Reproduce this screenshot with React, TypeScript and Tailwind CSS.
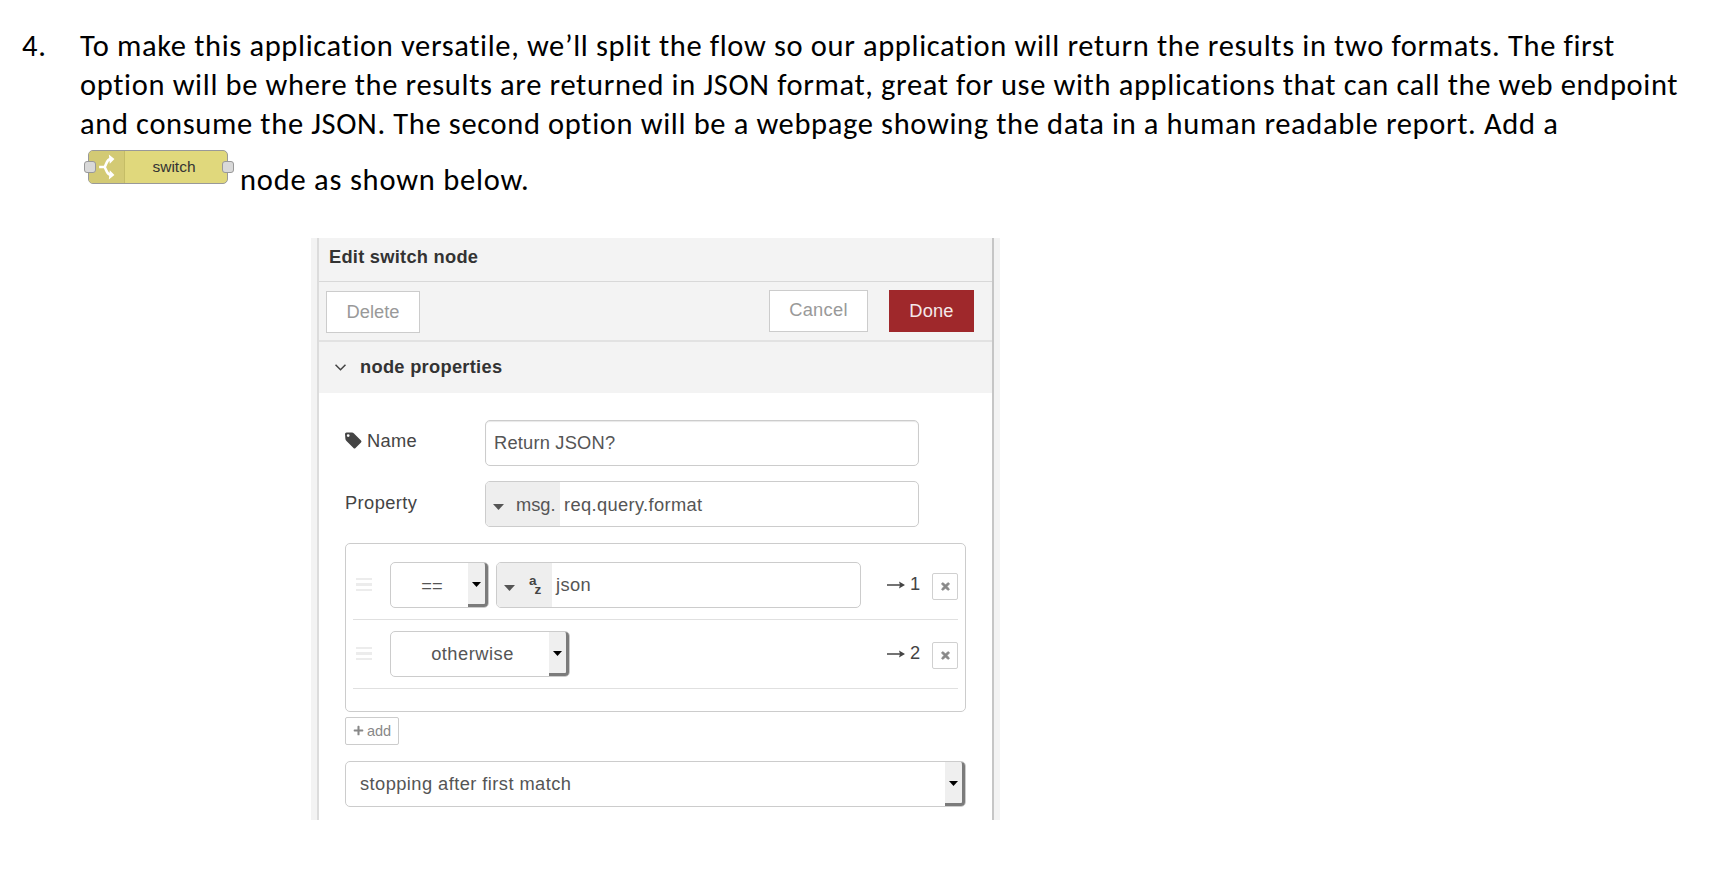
import React from "react";
import { FaPlus, FaTimes } from "react-icons/fa";

function SwitchNode() {
  return (
    <div className="relative mt-[6px] flex h-[34px] w-[140px] overflow-visible rounded-[5px] border-[1.5px] border-[#999] bg-[#e0d87c] font-['Liberation_Sans',sans-serif] tracking-normal">
      <div className="flex w-[36px] items-center justify-center rounded-l-[4px] border-r border-[#c5bd66] bg-[#d3ca74]">
        <svg className="ml-[1px] h-[26px] w-[18px]" viewBox="0 0 18 28" fill="none" stroke="#fff" strokeWidth="2.8">
          <path d="M0.5 14H7M12.5 5.5C9 6 9 9 6.5 14C9 19 9 22 12.500 22.500" />
          <path d="M11 0.500L17 5.500L12 10.500ZM12 17.500L17 22.500L11 27.500Z" fill="#fff" stroke="none" />
        </svg>
      </div>
      <div className="flex flex-1 items-center justify-center pr-[4px] text-[15.5px] text-[#333]">switch</div>
      <div className="absolute -left-[5px] top-[10px] h-[12px] w-[12px] rounded-[3px] border-[1.5px] border-[#999] bg-[#d9d9d9]" />
      <div className="absolute -right-[7px] top-[10px] h-[12px] w-[12px] rounded-[3px] border-[1.5px] border-[#999] bg-[#d9d9d9]" />
    </div>
  );
}

function Caret() {
  return (
    <svg className="h-[6px] w-[11px] shrink-0" viewBox="0 0 11 6">
      <path d="M0 0H11L5.500 6Z" fill="#555" />
    </svg>
  );
}

function SelectButton() {
  return (
    <div className="flex w-[20px] shrink-0 items-center justify-center rounded-r-[4px] border-b-[3px] border-r-[3px] border-[#7b7b7b] bg-[#efefef] pt-[2px]">
      <svg className="h-[5px] w-[9px]" viewBox="0 0 9 5">
        <path d="M0 0H9L4.500 5Z" fill="#000" />
      </svg>
    </div>
  );
}

function Handle() {
  return (
    <div className="flex w-[16px] flex-col gap-[3px]">
      <div className="h-[2.500px] bg-[#ececec]" />
      <div className="h-[2.500px] bg-[#ececec]" />
      <div className="h-[2.500px] bg-[#ececec]" />
    </div>
  );
}

function RuleTarget({ index }: { index: number }) {
  return (
    <div className="ml-auto flex items-center">
      <svg className="mt-[1px] h-[8px] w-[18px]" viewBox="0 0 18 8">
        <path d="M0 4H13" stroke="#444" strokeWidth="1.500" />
        <path d="M12 0.500L18 4L12 7.500L13 4Z" fill="#444" />
      </svg>
      <span className="-mt-[2px] ml-[5px] w-[10px] leading-[20px] text-[#444]">{index}</span>
      <div className="ml-[12px] mt-[3px] flex h-[27px] w-[26px] items-center justify-center rounded-[2px] border-[1.300px] border-[#d0d0d0] text-[#888]">
        <FaTimes size={11} strokeWidth={45} stroke="#888" />
      </div>
    </div>
  );
}

function Intro() {
  return (
    <div className="flex pl-[22px] pt-[26px] font-[Calibri,Carlito,Lato,sans-serif] text-[30.5px] leading-[39.2px] text-black">
      <div className="w-[58px] shrink-0 tracking-[0.7px]">4.</div>
      <div className="whitespace-nowrap tracking-[0.64px]">
        <div>To make this application versatile, we’ll split the flow so our application will return the results in two formats. The first</div>
        <div>option will be where the results are returned in JSON format, great for use with applications that can call the web endpoint</div>
        <div>and consume the JSON. The second option will be a webpage showing the data in a human readable report. Add a</div>
        <div className="flex h-[63px] pl-[8px]">
          <SwitchNode />
          <div className="ml-[12px] mt-[16px] tracking-[0.78px]">node as shown below.</div>
        </div>
      </div>
    </div>
  );
}

function EditDialog() {
  return (
    <div className="mt-[31px] ml-[311px] flex h-[582px] w-[689px] bg-[#f3f3f3] pl-[6px] pr-[6px] font-['Liberation_Sans',sans-serif] text-[18.300px] text-[#444]">
      <div className="flex w-[677px] flex-col border-l-2 border-r-2 border-l-[#dcdcdc] border-r-[#c6c6c6] bg-white">
        <div className="flex h-[44px] shrink-0 items-center border-b border-[#d8d8d8] bg-[#f3f3f3] pb-[4px] pl-[10px] font-bold tracking-[0.25px] text-[#333]">Edit switch node</div>
        <div className="flex h-[60px] shrink-0 items-start border-b-2 border-[#e2e2e2] bg-[#f3f3f3] pl-[7px] pr-[18px] pt-[8px] text-[#999]">
          <div className="mt-[1px] flex h-[42px] w-[94px] items-center justify-center border-[1.300px] border-[#ccc] bg-white">Delete</div>
          <div className="ml-auto flex h-[42px] w-[99px] items-center justify-center border-[1.300px] border-[#ccc] bg-white pb-px tracking-[0.3px]">Cancel</div>
          <div className="ml-[21px] flex h-[42px] w-[85px] items-center justify-center bg-[#9f282b] tracking-[0.2px] text-[#f4e8ea]">Done</div>
        </div>
        <div className="flex h-[51px] shrink-0 items-center bg-[#f3f3f3] pl-[16px] font-bold tracking-[0.28px] text-[#333]">
          <svg className="h-[7px] w-[11px]" viewBox="0 0 11 7" fill="none" stroke="#444" strokeWidth="1.600">
            <path d="M0.500 0.700L5.500 5.700L10.500 0.700" />
          </svg>
          <span className="ml-[14px]">node properties</span>
        </div>
        <div className="flex flex-1 flex-col pl-[26px] pt-[27px]">
          <div className="flex h-[46px]">
            <div className="flex w-[140px] items-center pb-[4px] tracking-[0.3px]">
              <svg className="h-[17px] w-[17px]" viewBox="0 0 17 17">
                <path fillRule="evenodd" d="M0 2Q0 0.500 1.500 0.500H7Q8 0.500 9 1.500L16 8.500Q17 9.500 16 10.500L10.500 16Q9.500 17 8.500 16L1.500 9Q0.500 8 0.400 7ZM3.200 2.200A1.400 1.400 0 1 0 3.200 5A1.400 1.400 0 1 0 3.200 2.200Z" fill="#444" />
              </svg>
              <span className="ml-[5px]">Name</span>
            </div>
            <div className="flex w-[434px] items-center rounded-[5px] border-[1.300px] border-[#ccc] pl-[8px] tracking-[0.2px] text-[#555] shadow-[inset_0_1px_1px_#e8e8e8]">Return JSON?</div>
          </div>
          <div className="mt-[15px] flex h-[46px]">
            <div className="flex w-[140px] items-center pb-[2px] tracking-[0.4px]">Property</div>
            <div className="flex w-[434px] overflow-hidden rounded-[5px] border-[1.300px] border-[#ccc] text-[#555]">
              <div className="flex w-[74px] items-center bg-[#eee] pl-[7px]">
                <span className="mt-[6px] flex"><Caret /></span>
                <span className="ml-[12px] mt-[2px]">msg.</span>
              </div>
              <div className="flex items-center pl-[4px] pt-[2px] tracking-[0.36px]">req.query.format</div>
            </div>
          </div>
          <div className="mt-[16px] h-[169px] w-[621px] rounded-[5px] border-[1.300px] border-[#ccc] px-[7px] pt-[7px]">
            <div className="flex h-[69px] items-center border-b-[1.500px] border-[#e0e0e0] pl-[3px]">
              <Handle />
              <div className="ml-[18px] flex h-[46px] w-[99px] rounded-[5px] border-[1.300px] border-[#ccc] text-[#555]">
                <div className="flex flex-1 items-center justify-center pl-[5px] pt-[2px]">==</div>
                <SelectButton />
              </div>
              <div className="ml-[7px] flex h-[46px] w-[365px] overflow-hidden rounded-[5px] border-[1.300px] border-[#ccc] text-[#555]">
                <div className="flex w-[55px] items-center bg-[#eee] pl-[7px]">
                  <span className="mt-[6px] flex"><Caret /></span>
                  <span className="ml-[14px] flex items-start text-[13.5px] font-bold leading-[13px] text-[#444]">
                    <span>a</span>
                    <span className="-ml-[2px] mt-[9px]">z</span>
                  </span>
                </div>
                <div className="flex items-center pl-[4px] tracking-[0.4px]">json</div>
              </div>
              <RuleTarget index={1} />
            </div>
            <div className="flex h-[69px] items-center border-b-[1.500px] border-[#e0e0e0] pl-[3px]">
              <Handle />
              <div className="ml-[18px] flex h-[46px] w-[180px] rounded-[5px] border-[1.300px] border-[#ccc] text-[#555]">
                <div className="flex flex-1 items-center justify-center pl-[5px] tracking-[0.5px]">otherwise</div>
                <SelectButton />
              </div>
              <RuleTarget index={2} />
            </div>
          </div>
          <div className="mt-[5px] flex h-[28px] w-[54px] items-center justify-center rounded-[2px] border-[1.300px] border-[#ccc] text-[14.500px] text-[#888]">
            <FaPlus size={11} />
            <span className="ml-[3px] mt-[2px]">add</span>
          </div>
          <div className="mt-[16px] flex h-[46px] w-[621px] rounded-[5px] border-[1.300px] border-[#ccc] text-[#555]">
            <div className="flex flex-1 items-center pl-[14px] tracking-[0.43px]">stopping after first match</div>
            <SelectButton />
          </div>
        </div>
      </div>
    </div>
  );
}

export default function App() {
  return (
    <div className="h-[896px] w-[1710px] overflow-hidden bg-white">
      <Intro />
      <EditDialog />
    </div>
  );
}
